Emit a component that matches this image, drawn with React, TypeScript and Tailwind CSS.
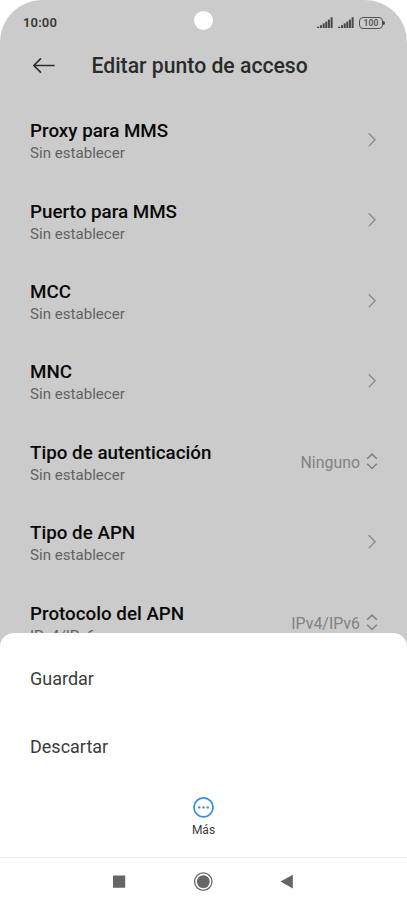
type Row = {
  title: string
  sub: string
  value?: string
}

const rows: Row[] = [
  { title: 'Proxy para MMS', sub: 'Sin establecer' },
  { title: 'Puerto para MMS', sub: 'Sin establecer' },
  { title: 'MCC', sub: 'Sin establecer' },
  { title: 'MNC', sub: 'Sin establecer' },
  { title: 'Tipo de autenticación', sub: 'Sin establecer', value: 'Ninguno' },
  { title: 'Tipo de APN', sub: 'Sin establecer' },
  { title: 'Protocolo del APN', sub: 'IPv4/IPv6', value: 'IPv4/IPv6' },
]

function Signal() {
  return (
    <svg width="16" height="12" viewBox="0 0 16 12" fill="#484848">
      <rect x="0" y="9.7" width="2.2" height="1.3" />
      <rect x="3" y="8.2" width="2" height="2.8" />
      <rect x="5.7" y="6.4" width="2" height="4.6" />
      <rect x="8.3" y="4.6" width="2" height="6.4" />
      <rect x="10.9" y="2.6" width="2" height="8.4" />
      <rect x="13.6" y="0.3" width="2" height="10.7" />
    </svg>
  )
}

function Battery() {
  return (
    <div className="flex items-center">
      <div className="flex h-[12px] w-[24px] items-center justify-center rounded-[4px] border-[1.5px] border-[#505050] text-[8.5px] leading-none font-semibold tracking-[0.2px] text-[#555555]">
        100
      </div>
      <div className="h-[4px] w-[2px] rounded-r-full bg-[#484848]" />
    </div>
  )
}

function ChevronRight() {
  return (
    <svg width="12" height="16" viewBox="0 0 12 16" fill="none" stroke="#8a8a8a" strokeWidth="1.3">
      <path d="M2.7 1.2 9.1 7.8 2.7 14.4" />
    </svg>
  )
}

function UpDown() {
  return (
    <svg width="12" height="18" viewBox="0 0 12 18" fill="none" stroke="#808080" strokeWidth="1.5">
      <path d="M1.2 6.8 6 2.1l4.8 4.7M1.2 11.8 6 16.5l4.8-4.7" />
    </svg>
  )
}

export default function App() {
  return (
    <div className="relative h-[906px] w-[407px] overflow-hidden bg-white font-['Roboto',sans-serif]">
      <div className="h-[700px] overflow-hidden rounded-t-[42px] bg-[#cbcbcb]">
        {/* Status bar */}
        <div className="flex h-[44px] items-center justify-between pt-[2px] pr-[22px] pl-[23px]">
          <span className="text-[13px] font-semibold tracking-[0.15px] text-[#383838]">10:00</span>
          <div className="flex items-center gap-[5px]">
            <Signal />
            <Signal />
            <Battery />
          </div>
        </div>

        {/* Title bar */}
        <header className="flex h-[55.6px] items-start pl-[32px]">
          <svg className="mt-[13px]" width="24" height="17" viewBox="0 0 24 17" fill="none" stroke="#2d2d2d" strokeWidth="1.7" strokeLinecap="round" strokeLinejoin="round">
            <path d="M22 8.5H2M8.5 1.8 1.8 8.5l6.7 6.7" />
          </svg>
          <h1 className="mt-[7px] ml-[35.5px] text-[21.2px] leading-[30px] font-medium text-[#2b2b2b]">
            Editar punto de acceso
          </h1>
        </header>

        {rows.map(({ title, sub, value }) => (
          <div key={title} className="flex h-[80.4px] items-center justify-between pr-[29px] pl-[30px]">
            <div className="pt-[4px]">
              <p className="text-[18.8px] leading-[24px] font-medium text-[#080808]">{title}</p>
              <p className="text-[15.1px] leading-[21px] text-[#626262]">{sub}</p>
            </div>
            {value ? (
              <div className="flex items-center gap-[6px]">
                <span className="pt-[4px] text-[15.9px] leading-[20px] text-[#828282]">{value}</span>
                <UpDown />
              </div>
            ) : (
              <ChevronRight />
            )}
          </div>
        ))}
      </div>

      {/* Front camera */}
      <div className="absolute top-[11px] left-[194px] size-[19px] rounded-full bg-white" />

      {/* Bottom sheet */}
      <div className="absolute bottom-0 left-0 flex h-[273px] w-full flex-col rounded-t-[14px] bg-white">
        <div className="flex flex-col pt-[11px] text-[18px] text-[#3c3c3c]">
          <button className="flex h-[68px] items-center pl-[30px]">Guardar</button>
          <button className="flex h-[68px] items-center pl-[30px]">Descartar</button>
        </div>
        <button className="flex flex-1 flex-col items-center pt-[16px]">
          <svg width="23" height="22" viewBox="0 0 23 22">
            <circle cx="11.5" cy="11.4" r="9.5" fill="none" stroke="#3490e0" strokeWidth="1.8" />
            <circle cx="7.3" cy="11.4" r="1.2" fill="#3490e0" />
            <circle cx="11.5" cy="11.4" r="1.2" fill="#3490e0" />
            <circle cx="15.7" cy="11.4" r="1.2" fill="#3490e0" />
          </svg>
          <span className="mt-[4px] text-[12px] leading-[16px] text-[#3c3c3c]">Más</span>
        </button>

        {/* Navigation bar */}
        <nav className="flex h-[49px] items-start border-t border-[#f0f0f0] pt-[14px] pl-[109px]">
          <svg width="190" height="20" viewBox="0 0 190 20" fill="#666666">
            <rect x="4" y="3.5" width="12.2" height="12.2" rx="0.5" />
            <circle cx="94.3" cy="9.6" r="8.7" fill="none" stroke="#666666" strokeWidth="1.3" />
            <circle cx="94.3" cy="9.6" r="6.4" />
            <path d="M171.5 9.6 183.8 2.7v13.8z" />
          </svg>
        </nav>
      </div>
    </div>
  )
}
